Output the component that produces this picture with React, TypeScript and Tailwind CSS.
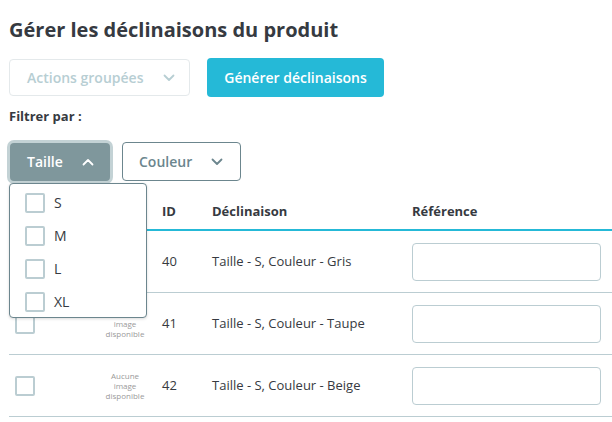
import React from 'react';

const font = { fontFamily: '"Open Sans", "Noto Sans", sans-serif' };

function Chevron({ up = false, className = '' }: { up?: boolean; className?: string }) {
  return (
    <svg width="12" height="8" viewBox="0 0 12 8" className={className}>
      <path
        d={up ? 'M1.5 6.5 L6 2 L10.5 6.5' : 'M1.5 1.5 L6 6 L10.5 1.5'}
        fill="none"
        stroke="currentColor"
        strokeWidth="1.8"
        strokeLinecap="round"
        strokeLinejoin="round"
      />
    </svg>
  );
}

function Box() {
  return <span className="block w-[20px] h-[20px] border-2 border-[#bbcdd2] rounded-[2px] bg-white" />;
}

const rows = [
  { id: 40, name: 'Taille - S, Couleur - Gris' },
  { id: 41, name: 'Taille - S, Couleur - Taupe' },
  { id: 42, name: 'Taille - S, Couleur - Beige' },
];

export default function App() {
  return (
    <div className="w-[612px] h-[422px] overflow-hidden bg-white text-[#363a41] relative" style={font}>
      <div className="pl-[9px] pt-[16px]">
        <h1 className="text-[20px] font-bold leading-[28px]">Gérer les déclinaisons du produit</h1>

        <div className="flex items-center mt-[14px] gap-[17px]">
          <div className="w-[181px] h-[37px] border border-[#e4e9eb] rounded-[4px] flex items-center justify-between pl-[17px] pr-[14px] text-[14px] font-semibold text-[#b7ced3]">
            <span>Actions groupées</span>
            <Chevron className="text-[#b7ced3]" />
          </div>
          <button className="w-[177px] h-[39px] bg-[#25b9d7] rounded-[4px] text-white text-[14px] font-semibold">
            Générer déclinaisons
          </button>
        </div>

        <div className="mt-[9px] text-[13px] font-bold leading-[20px]">Filtrer par :</div>

        <div className="flex mt-[16px] gap-[12px] items-center">
          <button className="ml-[1px] w-[100px] h-[38px] bg-[#7f979c] rounded-[4px] shadow-[0_0_0_3px_#c3d2d5] text-white text-[14px] font-semibold flex items-center justify-between pl-[17px] pr-[16px]">
            <span>Taille</span>
            <Chevron up />
          </button>
          <button className="w-[119px] h-[39px] border border-[#6c868e] rounded-[4px] text-[#6c868e] text-[14px] font-semibold flex items-center justify-between pl-[16px] pr-[17px]">
            <span>Couleur</span>
            <Chevron />
          </button>
        </div>
      </div>

      <div className="ml-[9px] mt-[14px]">
        <div className="flex h-[36px] items-center border-b-2 border-[#25b9d7] text-[13px] font-bold">
          <div className="w-[146px]" />
          <div className="w-[57px] pl-[7px]">ID</div>
          <div className="w-[200px]">Déclinaison</div>
          <div className="flex-1">Référence</div>
        </div>
        {rows.map((r) => (
          <div key={r.id} className="flex h-[62px] items-center border-b border-[#bbcdd2] text-[13px]">
            <div className="w-[86px] pl-[6px]">
              <Box />
            </div>
            <div className="w-[60px] text-center text-[8px] leading-[10px] text-[#9a9a9a]">
              Aucune
              <br />
              image
              <br />
              disponible
            </div>
            <div className="w-[57px] pl-[7px]">{r.id}</div>
            <div className="w-[200px]">{r.name}</div>
            <div className="flex-1">
              <div className="w-[189px] h-[38px] border border-[#bbcdd2] rounded-[4px]" />
            </div>
          </div>
        ))}
      </div>

      <div className="absolute left-[9px] top-[183px] w-[138px] h-[135px] bg-white border border-[#6c868e] rounded-[4px] shadow-[0_1px_3px_rgba(0,0,0,0.15)] pt-[2px]">
        {['S', 'M', 'L', 'XL'].map((s) => (
          <div key={s} className="flex items-center h-[33px] pl-[15px] gap-[9px] text-[14px] text-[#363a41]">
            <Box />
            <span>{s}</span>
          </div>
        ))}
      </div>
    </div>
  );
}
